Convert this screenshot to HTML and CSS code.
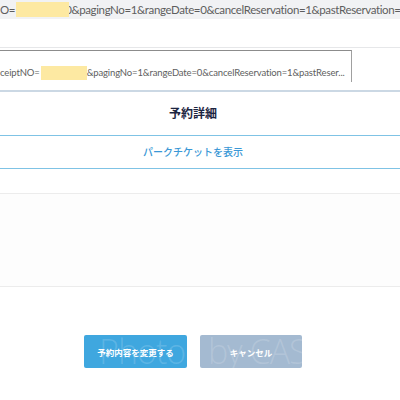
FILE: index.html
```html
<!DOCTYPE html>
<html lang="ja">
<head>
<meta charset="utf-8">
<link rel="stylesheet" href="styles.css">
</head>
<body>
<div class="page">
  <div class="urlbar">O=<span class="mask mask-top"></span>0&amp;pagingNo=1&amp;rangeDate=0&amp;cancelReservation=1&amp;pastReservation=1</div>
  <div class="gap-top"></div>
  <div class="tabrow">
    <div class="tab">ceiptNO=<span class="mask mask-tab"></span>&amp;pagingNo=1&amp;rangeDate=0&amp;cancelReservation=1&amp;pastReser...</div>
  </div>
  <div class="title">予約詳細</div>
  <div class="link">パークチケットを表示</div>
  <div class="spacer"></div>
  <div class="panel"></div>
  <div class="actions">
    <button class="btn btn-primary">予約内容を変更する</button>
    <button class="btn btn-cancel">キャンセル</button>
    <div class="watermark">Photos by CAS</div>
  </div>
</div>
</body>
</html>
```
FILE: styles.css
```css
html, body {
  margin: 0;
  padding: 0;
  background: #ffffff;
}
.page {
  width: 400px;
  height: 400px;
  overflow: hidden;
  font-family: "Lato", "Noto Sans CJK JP", sans-serif;
}
.urlbar {
  height: 19px;
  line-height: 19px;
  background: #f1f2f4;
  color: #5e5e5e;
  font-size: 11.5px;
  letter-spacing: -0.38px;
  white-space: nowrap;
  overflow: hidden;
}
.mask {
  display: inline-block;
  background: #fde9a2;
  vertical-align: top;
  position: relative;
}
.mask-top {
  width: 53px;
  height: 15px;
  margin-top: 2px;
  margin-right: -4px;
  margin-left: 1px;
}
.gap-top {
  height: 28px;
  border-bottom: 1px solid #e6e7e9;
}
.tabrow {
  padding-top: 2px;
  border-bottom: 2px solid #cbd8e4;
  box-sizing: border-box;
  height: 44px;
}
.tab {
  width: 352px;
  height: 32px;
  box-sizing: border-box;
  border-top: 1px solid #8c8c8c;
  border-right: 1px solid #a0a0a0;
  color: #5e5e5e;
  font-size: 9.5px;
  letter-spacing: -0.14px;
  line-height: 14px;
  padding-top: 15px;
  white-space: nowrap;
  overflow: hidden;
}
.mask-tab {
  width: 46px;
  height: 14px;
  margin-left: 1px;
}
.title {
  height: 44px;
  line-height: 42px;
  text-align: center;
  padding-right: 14px;
  font-family: "Noto Sans CJK JP", sans-serif;
  font-weight: 700;
  font-size: 12px;
  color: #1c2541;
  border-bottom: 1px solid #7fc3e5;
  box-sizing: border-box;
}
.link {
  height: 33px;
  line-height: 32px;
  text-align: center;
  padding-right: 14px;
  font-family: "Noto Sans CJK JP", sans-serif;
  font-weight: 500;
  font-size: 10px;
  color: #3a98d6;
  border-bottom: 1px solid #7fc3e5;
  box-sizing: border-box;
}
.spacer {
  height: 25px;
  border-bottom: 1px solid #ececec;
  box-sizing: border-box;
}
.panel {
  height: 93px;
  background: #fdfdfd;
  border-bottom: 1px solid #ececec;
  box-sizing: border-box;
}
.actions {
  position: relative;
  display: flex;
  gap: 13px;
  padding: 48px 0 0 84px;
}
.btn {
  height: 33px;
  border: none;
  border-radius: 2px;
  color: #ffffff;
  font-family: "Noto Sans CJK JP", sans-serif;
  font-weight: 700;
  font-size: 8.5px;
  padding: 0;
}
.btn-primary {
  width: 103px;
  background: #3fa7df;
}
.btn-cancel {
  width: 102px;
  background: #a4bad1;
}
.watermark {
  position: absolute;
  left: 99px;
  top: 44px;
  font-family: "Open Sans", sans-serif;
  font-weight: 300;
  font-size: 34px;
  line-height: 40px;
  letter-spacing: -1px;
  color: rgba(255, 255, 255, 0.16);
  white-space: nowrap;
  pointer-events: none;
}
```
